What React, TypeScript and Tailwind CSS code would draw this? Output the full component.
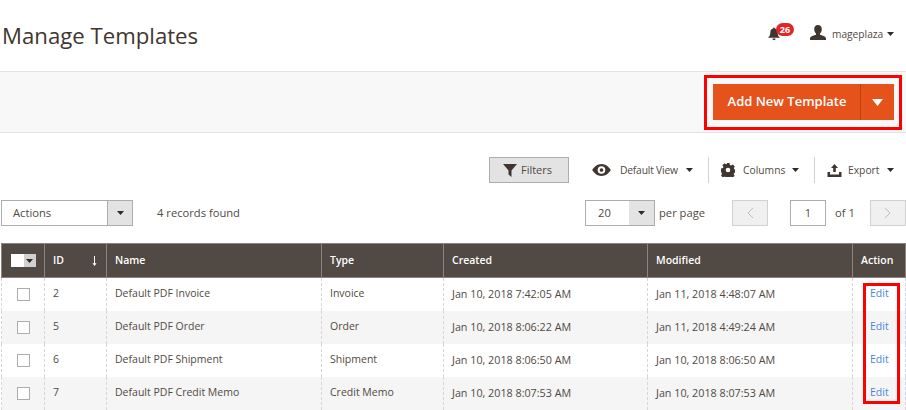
import React from "react";

const rows = [
  ["2", "Default PDF Invoice", "Invoice", "Jan 10, 2018 7:42:05 AM", "Jan 11, 2018 4:48:07 AM"],
  ["5", "Default PDF Order", "Order", "Jan 10, 2018 8:06:22 AM", "Jan 11, 2018 4:49:24 AM"],
  ["6", "Default PDF Shipment", "Shipment", "Jan 10, 2018 8:06:50 AM", "Jan 10, 2018 8:06:50 AM"],
  ["7", "Default PDF Credit Memo", "Credit Memo", "Jan 10, 2018 8:07:53 AM", "Jan 10, 2018 8:07:53 AM"],
];

function Caret({ className = "" }: { className?: string }) {
  return (
    <svg width="7" height="4" viewBox="0 0 7 4" className={className}>
      <path d="M0 0h7L3.5 4z" fill="#2e2a28" />
    </svg>
  );
}

function Chevron({ dir }: { dir: "l" | "r" }) {
  return (
    <svg width="8" height="12" viewBox="0 0 8 12" fill="none" stroke="#bdbdbd" strokeWidth="1">
      <path d={dir === "l" ? "M7 1 2 6l5 5" : "M1 1l5 5-5 5"} />
    </svg>
  );
}

export default function App() {
  return (
    <div className="relative w-[906px] h-[410px] overflow-hidden bg-white text-[#514943] text-[11px] font-['Open_Sans',sans-serif]">
      <header className="h-[72px] border-b border-[#e3e3e3] flex items-center pl-[2px] pr-[12px]">
        <h1 className="text-[22.2px] leading-none text-[#41362f] flex-1 pt-[2px]">Manage Templates</h1>
        <div className="flex items-center mb-[6px]">
          <div className="relative w-[26px] h-[16px] mr-[16px]">
            <svg width="12" height="14" viewBox="0 0 13 14" className="absolute left-0 top-[3px]">
              <path d="M6.5 0c.7 0 1 .4 1 1 2 .5 3 2 3 4 0 3 .7 4.200 2.200 5.500V11H.3v-.5C1.800 9.200 2.500 8 2.500 5c0-2 1-3.500 3-4 0-.6.3-1 1-1zM4.800 12h3.400c0 1-.7 1.800-1.700 1.800S4.800 13 4.800 12z" fill="#41362f" />
            </svg>
            <span className="absolute left-[8px] top-[-1px] w-[18px] h-[13px] rounded-full bg-[#e22626] text-white text-[9px] leading-[13px] font-bold text-center">26</span>
          </div>
          <svg width="16" height="15" viewBox="0 0 16 15" className="mr-[6px]">
            <path d="M8 0c2.500 0 3.800 1.800 3.800 4.200 0 1.800-.8 3.500-1.800 4.300v1.200c2 .8 6 1.500 6 3.800V15H0v-1.500c0-2.300 4-3 6-3.800V8.500C5 7.700 4.200 6 4.200 4.200 4.200 1.800 5.500 0 8 0z" fill="#41362f" />
          </svg>
          <span className="w-[49px] text-[10.2px] whitespace-nowrap mr-[6px] pt-[4px]">mageplaza</span>
          <span className="flex pt-[4px]"><Caret /></span>
        </div>
      </header>

      <div className="h-[61px] bg-[#f8f8f8] border-b border-[#e3e3e3] flex items-center justify-end pr-[12px]">
        <div className="w-[181px] h-[36px] bg-[#e6521b] flex items-center text-white">
          <span className="flex-1 text-center text-[13px] font-semibold pl-[1px]">Add New Template</span>
          <span className="w-[1px] h-[36px] bg-[#b8440f]" />
          <span className="w-[33px] flex justify-center">
            <svg width="11" height="7" viewBox="0 0 11 7"><path d="M0 0h11L5.500 7z" fill="#fff" /></svg>
          </span>
        </div>
      </div>

      <div className="flex items-center justify-end h-[26px] mt-[24px] pr-[12px] text-[10.3px]">
        <button className="w-[80px] h-[26px] bg-[#e3e3e3] border border-[#adadad] flex items-center justify-center gap-[4px] mr-[23px] text-[11px] pr-[3px]">
          <svg width="14" height="13" viewBox="0 0 14 13"><path d="M0 0h14L8.500 6.500V13L5.500 10.500V6.500z" fill="#41362f" /></svg>
          <span className="pt-[1px]">Filters</span>
        </button>
        <svg width="19" height="12" viewBox="0 0 17 11" className="mr-[9px]">
          <path fillRule="evenodd" d="M8.500 0c3.800 0 6.800 2.600 8.500 5.500C15.300 8.400 12.300 11 8.500 11S1.700 8.400 0 5.500C1.700 2.600 4.700 0 8.500 0zm0 2a3.500 3.500 0 100 7 3.500 3.500 0 000-7zm0 1.800a1.700 1.700 0 110 3.400 1.700 1.700 0 010-3.400z" fill="#41362f" />
        </svg>
        <span className="w-[58px] whitespace-nowrap tracking-[-0.2px] mr-[8px] pt-[2px]">Default View</span>
        <Caret className="mr-[15px]" />
        <span className="w-[1px] h-[26px] bg-[#d1d1d1] mr-[12px]" />
        <svg width="14" height="14" viewBox="0 0 14 14" className="mr-[8px]">
          <path fillRule="evenodd" d="M5.500 0h3l.4 1.900 1.200.5 1.700-1 2 2-1 1.700.5 1.200 1.700.4v2.800l-1.900.4-.5 1.200 1 1.700-2 2-1.700-1-1.200.5-.4 1.700h-3l-.4-1.900-1.200-.5-1.700 1-2-2 1-1.700-.5-1.200L0 8.500v-3l1.900-.4.5-1.200-1-1.700 2-2 1.700 1 1.200-.5zM7 4.700a2.300 2.300 0 100 4.600 2.300 2.300 0 000-4.600z" fill="#41362f" />
        </svg>
        <span className="w-[42px] whitespace-nowrap mr-[7px] pt-[2px]">Columns</span>
        <Caret className="mr-[15px]" />
        <span className="w-[1px] h-[26px] bg-[#d1d1d1] mr-[12px]" />
        <svg width="15" height="13" viewBox="0 0 14 13" className="mr-[6px]">
          <path d="M7 0l3.500 4H8.300v4H5.700V4H3.500zM0 8h2.500v2.500h9V8H14v5H0z" fill="#41362f" />
        </svg>
        <span className="w-[31px] whitespace-nowrap mr-[8px] pt-[2px]">Export</span>
        <Caret />
      </div>

      <div className="flex items-center h-[26px] mt-[17px] pl-[1px] text-[11.2px]">
        <div className="w-[132px] h-[26px] border border-[#adadad] flex items-center">
          <span className="flex-1 pl-[11px]">Actions</span>
          <span className="w-[25px] h-full bg-[#e3e3e3] border-l border-[#adadad] flex items-center justify-center"><Caret /></span>
        </div>
        <span className="ml-[24px] flex-1">4 records found</span>
        <div className="w-[70px] h-[26px] border border-[#adadad] flex items-center">
          <span className="flex-1 pl-[12px]">20</span>
          <span className="w-[25px] h-full bg-[#e3e3e3] flex items-center justify-center"><Caret /></span>
        </div>
        <span className="ml-[4px] w-[46px] whitespace-nowrap mr-[27px]">per page</span>
        <span className="w-[36px] h-[26px] bg-[#f0f0f0] border border-[#d1d1d1] flex items-center justify-center"><Chevron dir="l" /></span>
        <span className="ml-[22px] w-[36px] h-[26px] border border-[#adadad] flex items-center justify-center">1</span>
        <span className="ml-[9px] w-[20px] whitespace-nowrap mr-[15px]">of 1</span>
        <span className="w-[36px] h-[26px] bg-[#f0f0f0] border border-[#d1d1d1] flex items-center justify-center"><Chevron dir="r" /></span>
      </div>

      <table className="ml-[1px] mt-[17px] w-[904px] table-fixed border-collapse text-[10.5px]">
        <colgroup>
          <col className="w-[43px]" /><col className="w-[62px]" /><col className="w-[215px]" /><col className="w-[122px]" /><col className="w-[204px]" /><col className="w-[205px]" /><col className="w-[53px]" />
        </colgroup>
        <thead>
          <tr className="h-[34px] bg-[#514943] text-white text-left">
            <th className="border border-[#8a837f] font-semibold">
              <div className="flex justify-center">
                <span className="w-[25px] h-[13px] bg-white flex justify-end">
                  <span className="w-[12px] h-[13px] bg-[#d1d1d1] flex items-center justify-center"><Caret /></span>
                </span>
              </div>
            </th>
            <th className="border border-[#8a837f] font-semibold pl-[8px]">
              <div className="flex items-center justify-between pr-[9px]">
                <span>ID</span>
                <svg width="5" height="10" viewBox="0 0 5 10"><path d="M2.500 0v9M1 7l1.500 2.500L4 7" stroke="#fff" fill="none" /></svg>
              </div>
            </th>
            {["Name", "Type", "Created", "Modified"].map((h) => (
              <th key={h} className="border border-[#8a837f] font-semibold pl-[8px]">{h}</th>
            ))}
            <th className="border border-[#8a837f] font-semibold pl-[8px]">Action</th>
          </tr>
        </thead>
        <tbody>
          {rows.map((r, i) => (
            <tr key={r[0]} className={`h-[33px] ${i % 2 ? "bg-[#f5f5f5]" : "bg-white"}`}>
              <td className="border-x border-dashed border-[#d6d6d6]">
                <div className="flex justify-center"><span className="w-[13px] h-[13px] bg-white border border-[#adadad]" /></div>
              </td>
              <td className="border-x border-dashed border-[#d6d6d6] pl-[8px] whitespace-nowrap">{r[0]}</td>
              <td className="border-x border-dashed border-[#d6d6d6] pl-[8px] whitespace-nowrap">{r[1]}</td>
              <td className="border-x border-dashed border-[#d6d6d6] pl-[8px] whitespace-nowrap">{r[2]}</td>
              <td className="border-x border-dashed border-[#d6d6d6] pl-[8px] whitespace-nowrap text-[10.75px]">{r[3]}</td>
              <td className="border-x border-dashed border-[#d6d6d6] pl-[8px] whitespace-nowrap text-[10.75px]">{r[4]}</td>
              <td className="border-x border-dashed border-[#d6d6d6] pl-[17px] text-[#4a86d8]">Edit</td>
            </tr>
          ))}
        </tbody>
      </table>

      <div className="absolute left-[704px] top-[75px] w-[198px] h-[55px] border-[3px] border-[#ff0000]" />
      <div className="absolute left-[863px] top-[283px] w-[37px] h-[121px] border-[3px] border-[#ff0000]" />
    </div>
  );
}
